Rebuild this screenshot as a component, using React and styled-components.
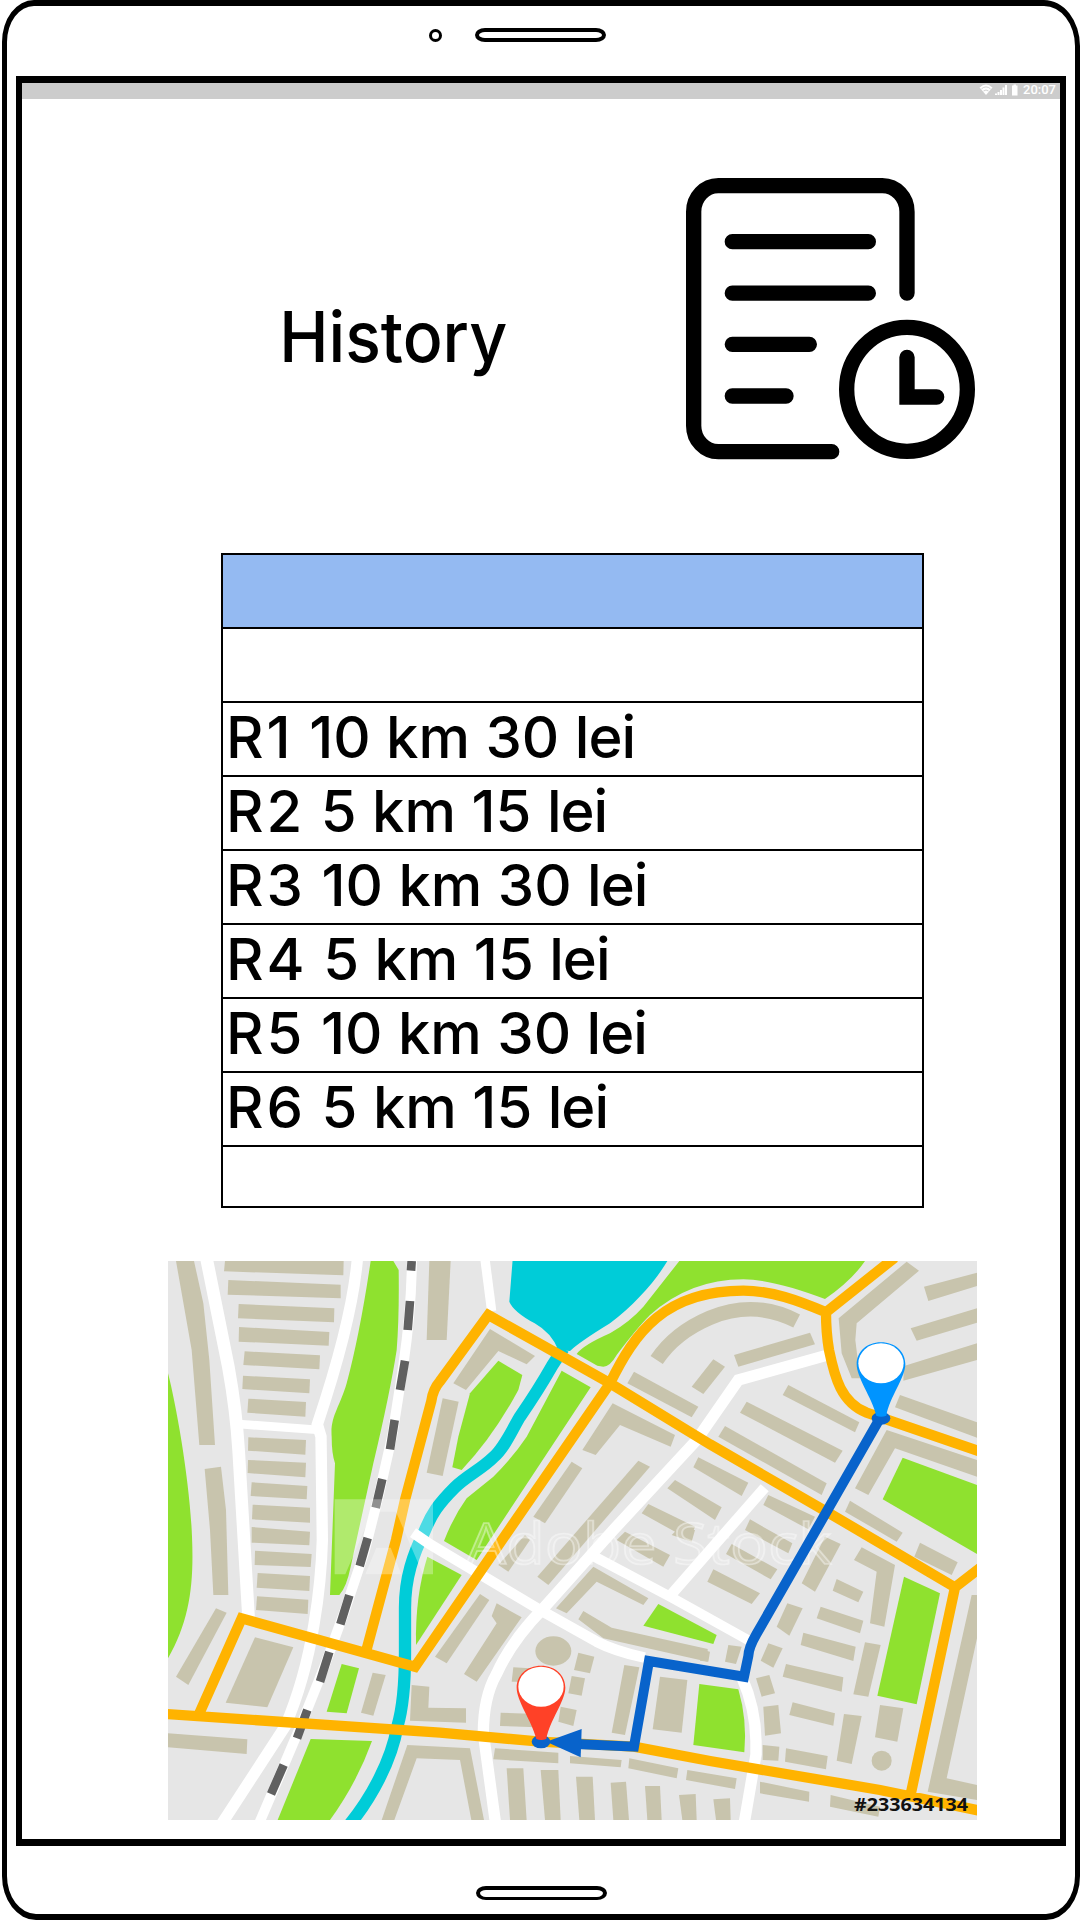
import React from 'react';
import styled, { createGlobalStyle } from 'styled-components';

const GlobalStyle = createGlobalStyle`
  *, *::before, *::after { box-sizing: border-box; }
  body { margin: 0; background: #fff; }
`;

const Device = styled.div`
  width: 1080px;
  height: 1920px;
  padding-left: 2px;
  background: #fff;
  overflow: hidden;
  color: #000;
  font-family: Inter, 'Open Sans', sans-serif;
`;

const Shell = styled.div`
  height: 1920px;
  display: flex;
  flex-direction: column;
  border: solid #000;
  border-width: 6px 5px 6px 5px;
  border-radius: 32px 36px 34px 34px / 42px 46px 44px 44px;
`;

const TopBezel = styled.div`
  height: 70px;
  flex: none;
  display: flex;
  align-items: flex-start;
  padding: 22px 0 0 422px;
  gap: 33px;
`;

const Camera = styled.div`
  width: 13px;
  height: 13px;
  margin-top: 1px;
  border: 3.5px solid #000;
  border-radius: 50%;
`;

const Slot = styled.div`
  width: 131px;
  height: 14px;
  border: 4px solid #000;
  border-bottom-width: ${(p) => (p.$thin ? '3px' : '4px')};
  border-radius: 10px / 7px;
`;

const BottomBezel = styled.div`
  display: flex;
  justify-content: center;
  padding: 40px 0 0 1px;
`;

const Screen = styled.div`
  width: 1050px;
  height: 1770px;
  flex: none;
  margin-left: 9px;
  border: solid #000;
  border-width: 7px 6px 7px 6px;
  display: flex;
  flex-direction: column;
`;

const StatusBar = styled.div`
  height: 16px;
  flex: none;
  background: #ccc;
  display: flex;
  justify-content: flex-end;
  align-items: center;
  padding: 0 5px 3px 0;
`;

const Clock = styled.span`
  font: 500 13px/13px Roboto, sans-serif;
  color: #fff;
  margin-left: 4px;
  width: 32px;
`;

const Header = styled.header`
  display: flex;
  height: 320px;
  margin-top: 61px;
  padding-left: 257px;
  gap: 154px;
`;

const Title = styled.h1`
  margin: 0;
  padding-top: 132px;
  width: 227px;
  white-space: nowrap;
  font-size: 70px;
  line-height: 90px;
  font-weight: 500;
  transform: scaleX(0.945);
  transform-origin: 4px 0;
`;

const Table = styled.div`
  width: 703px;
  margin: 73px 0 0 199px;
  border: 2px solid #000;
`;

const Row = styled.div`
  height: ${(p) => (p.$last ? '59px' : '74px')};
  border-bottom: ${(p) => (p.$last ? 'none' : '2px solid #000')};
  background: ${(p) => (p.$head ? '#94baf2' : '#fff')};
  padding-left: 3px;
  font-size: 58px;
  line-height: 69px;
  font-weight: 500;
  white-space: pre;
`;

const RouteCode = styled.span`
  letter-spacing: 3px;
`;

const Fare = styled.span`
  letter-spacing: -1px;
`;

const MapFrame = styled.div`
  width: 809px;
  height: 559px;
  margin: 53px 0 0 146px;
  flex: none;

  svg { display: block; }
`;

const ROWS = [
  { head: true },
  {},
  { code: 'R1', distance: '10 km 30', currency: 'lei' },
  { code: 'R2', distance: '5 km 15', currency: 'lei' },
  { code: 'R3', distance: '10 km 30', currency: 'lei' },
  { code: 'R4', distance: '5 km 15', currency: 'lei' },
  { code: 'R5', distance: '10 km 30', currency: 'lei' },
  { code: 'R6', distance: '5 km 15', currency: 'lei' },
  { last: true },
];

// The map is drawn in six tiles; each has its own origin in map units.
const TILES = {
  a: 'translate(-24 -33)',
  b: 'translate(786 -33)',
  c: 'translate(1596 -33)',
  d: 'translate(-24 807)',
  e: 'translate(786 807)',
  f: 'translate(1596 807)',
};

const PARKS = {
  a: [
    'M24 370C50 470 90 700 96 860C102 1000 90 1110 24 1225Z',
    'M632 33Q600 250 560 400C540 470 510 500 515 560Q515 610 525 640L510 1035H538Q560 1010 572 950L640 640Q690 430 710 300Q718 200 716 60L700 33Z',
  ],
  b: [
    'M748 33H1305Q1265 92 1185 147Q1030 88 940 88Q780 88 660 195Q620 235 560 315Q540 350 520 350L502 347L440 312Q460 285 540 250Q600 215 640 170Z',
    'M205 332L277 375L265 420Q190 560 95 660L67 652L85 560L120 430Z',
    'M395 362L482 412L140 930L42 873Q70 800 110 745L190 680Q250 620 290 560Z',
  ],
  c: ['M608 623L831 705V912L548 748Z'],
  d: ['M545 402L597 415L560 550L500 545Z', 'M452 627L636 633Q590 760 510 870H353Z'],
  e: ['M-8 80L95 135L-42 345Q-45 200 -8 80Z', 'M685 222L860 315L850 342L640 287Z'],
  f: ['M-2 462L115 478Q142 570 133 667L-20 645Z', 'M612 140L720 190L650 523L532 497Z'],
};

const BUILDINGS = {
  a: [
    '48,33 102,33 130,160 148,330 165,585 118,585 95,300', '134,657 183,650 198,780 205,1035 160,1035 150,840',
    '195,33 551,33 550,76 192,64', '205,90 542,104 542,145 203,134', '236,162 523,175 522,217 234,205',
    '237,231 508,246 506,287 236,275', '254,304 480,316 478,358 250,345', '249,377 450,388 448,430 247,417',
    '265,446 438,456 436,500 262,488', '265,562 438,570 436,614 264,602', '264,630 438,638 436,682 263,669',
    '275,697 442,708 440,748 272,738', '278,764 450,773 450,818 276,808', '275,831 450,845 448,886 275,878',
  ],
  b: [
    '-2,33 62,33 50,270 -10,270', '38,445 86,455 38,678 -10,668', '180,237 315,318 290,343 205,303 108,420 70,400',
    '612,365 805,470 785,502 592,400', '548,460 735,555 722,590 570,525 497,615 457,600', '425,635 457,655 345,820 310,800',
    '625,632 660,650 355,1005 322,980', '735,690 875,772 855,810 712,715', '655,762 795,830 780,870 635,790',
    '805,622 955,698 935,738 790,652',
  ],
  c: [
    '40,328 75,350 10,432 -25,410', '102,315 330,248 345,283 115,350', '620,35 657,62 470,220 466,270 480,385 455,385 425,310 416,205',
    '672,110 831,68 831,108 685,153', '632,235 831,175 831,218 650,272', '612,348 831,280 831,330 610,392',
    '265,405 478,517 465,547 248,435', '140,455 428,602 405,638 120,488', '75,528 380,700 365,735 55,560',
    '600,435 831,517 831,563 585,472', '560,540 831,630 831,680 585,595 505,735 465,715', '205,735 345,800 325,838 190,765',
    '450,752 608,848 590,875 435,785', '150,808 277,880 265,910 135,840',
  ],
  d: [
    '285,62 455,72 452,111 284,105', '293,129 450,138 448,183 290,173', '291,199 445,209 443,252 288,240',
    '168,235 200,248 85,465 48,440', '285,322 400,352 322,532 197,518', '638,428 677,435 640,557 603,548',
    '24,610 262,628 260,672 24,652', '742,645 930,655 972,870 934,870 900,690 770,685 703,870 665,870',
  ],
  e: [
    '150,192 178,210 50,400 15,380', '200,220 275,262 140,455 102,432 200,280 185,258', '250,412 300,415 290,455 245,455',
    '445,368 493,380 480,430 432,420', '425,438 465,445 455,497 415,490', '392,530 440,540 430,588 385,575',
    '212,548 320,552 320,592 210,588', '-55,465 -2,470 -5,533 108,535 108,578 -60,572',
    '490,110 655,205 640,225 500,155 410,250 378,235', '460,243 545,293 833,357 833,395 520,325 445,268',
    '585,5 720,75 700,110 560,30', '285,15 300,30 235,125 205,105', '740,0 795,0 785,35 725,15',
    '583,405 628,412 585,615 545,608', '690,440 772,450 755,608 668,598', '195,655 385,668 385,700 190,688',
    '420,678 575,690 572,712 420,700', '598,685 745,715 740,745 595,715', '772,720 920,745 915,777 768,750',
    '230,715 280,715 290,870 240,870', '332,720 385,720 392,870 345,870', '438,740 488,740 495,870 448,870',
    '542,758 588,755 597,870 550,870', '645,768 690,768 695,870 652,870', '747,795 797,792 800,870 757,870',
  ],
  f: [
    '40,118 180,190 155,222 22,155', '95,42 232,118 212,148 78,72', '375,20 422,42 345,185 305,160',
    '410,147 490,185 475,217 398,182', '485,52 585,105 553,290 510,280 530,125 462,90', '660,38 773,97 755,135 643,80',
    '262,220 308,235 268,317 230,290', '362,230 490,272 480,310 350,265', '310,308 467,350 460,393 302,345',
    '205,340 248,355 220,413 182,392', '258,402 430,442 425,485 248,440', '168,445 208,435 225,490 185,500',
    '190,530 235,525 243,610 195,617', '278,517 405,550 400,587 268,555', '495,337 542,345 505,500 460,493',
    '432,552 485,558 455,702 410,692', '540,525 610,535 592,635 525,622', '188,645 238,650 235,692 188,690',
    '258,655 383,678 378,718 255,695', '180,755 328,785 327,815 180,790', '392,795 540,830 535,860 390,830',
    '815,195 831,195 831,325 740,745 831,765 831,810 683,785', '85,345 125,350 108,402 75,395',
    '0,358 30,365 25,395 0,392', '40,808 90,805 92,870 48,870',
  ],
};

const STREETS = [
  ['M116 -5L181 317Q205 450 212 570L242 1075', 38],
  ['M211 489L456 507', 26],
  ['M568 -5Q552 180 448 490L459 527L463 837Q460 960 438 1090Q410 1260 351 1397L160 1690', 34],
  ['M735 815L786 850L1116 1047L1286 1142Q1340 1170 1430 1190', 32],
  ['M983 1690L946 1417Q946 1310 985 1240Q1030 1140 1126 1042L1336 807L1586 537L1711 357L1975 283', 34],
  ['M1276 885L1506 1007L1740 1137', 30],
  ['M1506 1005L1790 680', 32],
  ['M1722 1250Q1762 1340 1764 1440V1480L1728 1690', 34],
  ['M951 -5L971 150', 28],
];

const RAIL = 'M732 -5Q730 150 706 312L673 522L633 700L590 870L531 1047L469 1217L401 1387L329 1557L272 1690';
const SLEEPERS =
  'M731 0L729 29M726 120L719 207M711 299L696 387M680 477L666 565M643 654L623 740M599 831L575 915M544 1003L517 1090M484 1173L456 1262M418 1347L387 1432M347 1512L309 1599';

const MAIN_ROADS =
  'M594 1172L684 837L711 717L790 420Q795 385 815 362L961 162L1166 277L1326 367L1626 550L1976 752L2361 979L2440 918' +
  'M2361 979L2228 1600' +
  'M1326 367C1400 215 1490 89 1726 89C1810 89 1890 118 1974 154L2180 -10' +
  'M1974 154Q1974 215 1983 267C2000 350 2020 425 2096 455L2440 573' +
  'M1326 367L1007 830L741 1217L221 1072L94 1357' +
  'M-5 1359L816 1415L1116 1442L1398 1457L1626 1500L2136 1587L2440 1650';

function Tiled({ data, render }) {
  return Object.entries(data).map(([tile, items]) => (
    <g key={tile} transform={TILES[tile]}>
      {items.map((d, i) => render(d, i))}
    </g>
  ));
}

function Pin({ color, x, y }) {
  return (
    <g transform={`translate(${x} ${y})`}>
      <path
        fill={color}
        d="M0 -64C42 -64 73 -36 73 2C73 42 26 100 16 156Q0 162 -14 156C-28 100 -73 42 -73 2C-73 -36 -42 -64 0 -64Z"
      />
      <ellipse cx="0" cy="-1" rx="68" ry="60" fill="#fff" />
    </g>
  );
}

function CityMap() {
  return (
    <svg width="809" height="559" viewBox="0 0 2427 1677" preserveAspectRatio="none">
      <rect width="2427" height="1677" fill="#e6e6e6" />
      <g fill="#8fe12f">
        <Tiled data={PARKS} render={(d, i) => <path key={i} d={d} />} />
      </g>
      <g fill="#c8c4ad">
        <Tiled data={BUILDINGS} render={(d, i) => <polygon key={i} points={d} />} />
        <ellipse cx="1156" cy="1170" rx="54" ry="44" />
        <circle cx="2141" cy="1499" r="30" />
      </g>
      <path d="M1466 297Q1520 215 1626 170Q1760 115 1886 180" fill="none" stroke="#c8c4ad" strokeWidth="44" />
      <path
        d="M1034 -5L1024 122Q1036 152 1100 187Q1150 215 1171 267L1206 270Q1236 242 1326 187C1406 127 1470 50 1501 -5Z"
        fill="#00ccd8"
      />
      <path
        d="M1186 262L1152 315C1115 380 1085 425 1056 467C1030 510 1010 560 975 590C940 625 895 645 860 680C810 730 790 760 770 810C735 880 711 950 711 1040V1177C711 1280 705 1340 688 1397C670 1500 610 1610 545 1690"
        fill="none"
        stroke="#00ccd8"
        strokeWidth="37"
      />
      <g fill="none" stroke="#fff">
        {STREETS.map(([d, w]) => (
          <path key={d} d={d} strokeWidth={w} />
        ))}
        <path d={RAIL} strokeWidth="30" />
      </g>
      <path d={SLEEPERS} fill="none" stroke="#606060" strokeWidth="26" />
      <path d={MAIN_ROADS} fill="none" stroke="#ffb300" strokeWidth="31" />

      <g fill="#fff">
        <path
          fillRule="evenodd"
          opacity="0.3"
          d="M500 715H795V940H500ZM612 752L532 940H592L625 860H668L700 940H765L684 752ZM648 800L690 905"
        />
        <text
          x="895"
          y="910"
          fontFamily="'Open Sans', sans-serif"
          fontSize="170"
          textLength="1095"
          lengthAdjust="spacingAndGlyphs"
          fillOpacity="0.15"
          stroke="#fff"
          strokeOpacity="0.4"
          strokeWidth="5"
        >
          Adobe Stock
        </text>
      </g>

      <path
        d="M2136 472L1765 1120Q1742 1160 1741 1185L1728 1247L1443 1200L1398 1457L1225 1449"
        fill="none"
        stroke="#0863cb"
        strokeWidth="30"
      />
      <path d="M1135 1442L1241 1404L1238 1489Z" fill="#0863cb" />
      <ellipse cx="1119" cy="1442" rx="28" ry="20" fill="#0863cb" />
      <ellipse cx="2139" cy="472" rx="28" ry="19" fill="#0863cb" />
      <Pin color="#0094ff" x={2139} y={308} />
      <Pin color="#ff4127" x={1119} y={1278} />
      <text
        x="2058"
        y="1651"
        fontFamily="'Open Sans', 'Noto Sans', sans-serif"
        fontWeight="700"
        fontSize="55"
        textLength="342"
        lengthAdjust="spacingAndGlyphs"
        fill="#111"
      >
        #233634134
      </text>
    </svg>
  );
}

function HistoryIcon() {
  return (
    <svg width="340" height="320" viewBox="0 0 1020 960" fill="none" stroke="#000" strokeWidth="46" strokeLinecap="round">
      <path d="M741 399V155A74 78 0 0 0 667 77H175A74 78 0 0 0 101 155V797A74 78 0 0 0 175 875H515" />
      <path d="M217 245H625M217 399.5H625M217 553H448M217 708H378" />
      <ellipse cx="741" cy="688" rx="181" ry="186" />
      <path d="M741 592V711H830" strokeLinejoin="miter" />
    </svg>
  );
}

function StatusIcons() {
  return (
    <svg width="40" height="12" viewBox="0 0 40 12" fill="#fff">
      <path d="M7 11L0.5 3.5Q7 -2.5 13.500 3.500Z" />
      <path d="M2.500 4.800Q7 1 11.500 4.800M4.500 7Q7 5 9.500 7" fill="none" stroke="#ccc" strokeWidth="0.9" />
      <path d="M16 11V9.500H18V11ZM18.500 11V8H20.500V11ZM21 11V6H23V11ZM23.500 11V3.500H25.500V11ZM26 11V1H28V11Z" />
      <path d="M33 1.500H34.500V0.500H37V1.500H38.500V11.500H33Z" />
    </svg>
  );
}

export default function App() {
  return (
    <>
      <GlobalStyle />
      <Device>
        <Shell>
          <TopBezel>
            <Camera />
            <Slot />
          </TopBezel>
          <Screen>
            <StatusBar>
              <StatusIcons />
              <Clock>20:07</Clock>
            </StatusBar>
            <Header>
              <Title>History</Title>
              <HistoryIcon />
            </Header>
            <Table>
              {ROWS.map((row, i) => (
                <Row key={i} $head={row.head} $last={row.last}>
                  {row.code && (
                    <>
                      <RouteCode>{row.code}</RouteCode> {row.distance} <Fare>{row.currency}</Fare>
                    </>
                  )}
                </Row>
              ))}
            </Table>
            <MapFrame>
              <CityMap />
            </MapFrame>
          </Screen>
          <BottomBezel>
            <Slot $thin />
          </BottomBezel>
        </Shell>
      </Device>
    </>
  );
}
